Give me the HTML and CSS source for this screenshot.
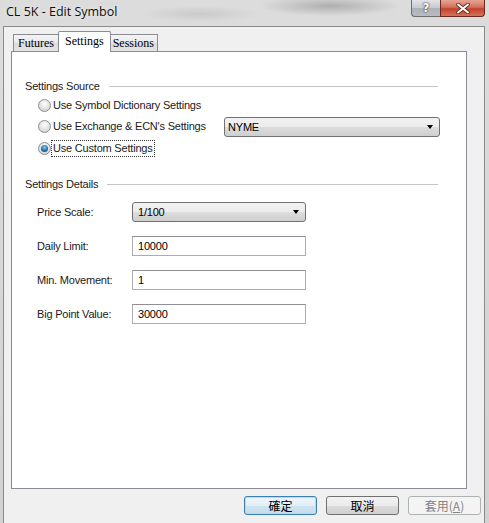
FILE: index.html
```html
<!DOCTYPE html>
<html>
<head>
<meta charset="utf-8">
<link rel="stylesheet" href="styles.css">
</head>
<body>
<div class="window">
  <div class="titlebar">
    <div class="title">CL 5K - Edit Symbol</div>
    <div class="caption">
      <div class="cap help">?</div>
      <div class="cap close">
        <svg width="14" height="11" viewBox="0 0 14 11"><path d="M2 1.5 L12 9.5 M12 1.5 L2 9.5" stroke="#5a2a20" stroke-width="3.6" stroke-linecap="round"/><path d="M2 1.5 L12 9.5 M12 1.5 L2 9.5" stroke="#ffffff" stroke-width="2" stroke-linecap="round"/></svg>
      </div>
    </div>
  </div>
  <div class="client">
    <div class="tabs">
      <div class="tab">Futures</div>
      <div class="tab active">Settings</div>
      <div class="tab">Sessions</div>
    </div>
    <div class="panel">
      <div class="group-head first"><span>Settings Source</span><div class="rule"></div></div>
      <div class="radio-row r1"><span class="radio"></span><span class="rlabel">Use Symbol Dictionary Settings</span></div>
      <div class="radio-row r2"><span class="radio"></span><span class="rlabel">Use Exchange &amp; ECN's Settings</span>
        <div class="combo wide"><span>NYME</span><span class="arrow"></span></div>
      </div>
      <div class="radio-row r3"><span class="radio checked"></span><span class="rlabel focus">Use Custom Settings</span></div>

      <div class="group-head second"><span>Settings Details</span><div class="rule"></div></div>
      <div class="form">
        <div class="frow"><span class="flabel">Price Scale:</span><div class="combo field"><span>1/100</span><span class="arrow"></span></div></div>
        <div class="frow"><span class="flabel">Daily Limit:</span><div class="input field">10000</div></div>
        <div class="frow"><span class="flabel">Min. Movement:</span><div class="input field">1</div></div>
        <div class="frow"><span class="flabel">Big Point Value:</span><div class="input field">30000</div></div>
      </div>
    </div>
    <div class="buttons">
      <div class="btn default">確定</div>
      <div class="btn">取消</div>
      <div class="btn disabled">套用(<u>A</u>)</div>
    </div>
  </div>
</div>
</body>
</html>
```
FILE: styles.css
```css
html, body {
  margin: 0;
  padding: 0;
}
body {
  width: 489px;
  height: 523px;
  overflow: hidden;
  font-family: "Liberation Sans", Arial, sans-serif;
  font-size: 11px;
  letter-spacing: -0.2px;
  color: #1a1a1a;
}
.window {
  width: 489px;
  height: 523px;
  display: flex;
  flex-direction: column;
  background:
    radial-gradient(ellipse 70px 10px at 330px 6px, rgba(120,120,120,0.45), rgba(120,120,120,0) 100%),
    radial-gradient(ellipse 60px 8px at 200px 14px, rgba(150,150,150,0.25), rgba(150,150,150,0) 100%),
    linear-gradient(#dcdcdc, #d2d2d2);
}
.titlebar {
  height: 26px;
  display: flex;
  align-items: flex-start;
  flex-shrink: 0;
}
.title {
  font-family: "Open Sans", "Liberation Sans", sans-serif;
  font-size: 12.5px;
  letter-spacing: 0;
  color: #101010;
  padding: 3px 0 0 6px;
  line-height: 18px;
  text-shadow: 0 0 6px rgba(255,255,255,0.8);
}
.caption {
  margin-left: auto;
  margin-right: 4px;
  display: flex;
}
.cap {
  height: 17px;
  border: 1px solid #6d6d6d;
  border-top: none;
  box-sizing: border-box;
  display: flex;
  align-items: center;
  justify-content: center;
}
.help {
  width: 29px;
  border-radius: 0 0 0 4px;
  border-right: none;
  background: linear-gradient(#e2e4e7, #c6c9ce 50%, #aeb2b8 51%, #b8bcc2);
  color: #fff;
  font-family: "DejaVu Sans", sans-serif;
  font-weight: bold;
  font-size: 12px;
  letter-spacing: 0;
  text-shadow: 0 0 2px #333, 0 0 1px #333;
}
.close {
  width: 45px;
  border-radius: 0 0 4px 0;
  border-color: #6a2a20;
  background: linear-gradient(#e8a493, #d3705b 45%, #c4412a 55%, #d5735b);
}
.client {
  flex: 1;
  margin: 0 4px 0 3px;
  border: 1px solid #8a8a8a;
  border-bottom: none;
  background: #f0f0f0;
  padding: 4px 2px 0 7px;
  display: flex;
  flex-direction: column;
}
.tabs {
  display: flex;
  align-items: flex-end;
  padding-left: 2px;
  margin-bottom: -1px;
  position: relative;
  z-index: 1;
  height: 21px;
}
.tab {
  height: 17px;
  box-sizing: border-box;
  margin-bottom: 1px;
  border: 1px solid #898c95;
  border-bottom: none;
  padding: 0 4px;
  font-family: "Liberation Serif", "Times New Roman", serif;
  font-size: 12px;
  letter-spacing: 0;
  line-height: 16px;
  color: #000;
  background: linear-gradient(#f4f4f4, #e9e9e9 50%, #dcdcdc 51%, #e4e4e4);
}
.tab + .tab {
  border-left: none;
}
.tab.active {
  height: 21px;
  margin: 0 -2px 0 -1px;
  padding: 0 6px;
  border-left: 1px solid #898c95;
  border-radius: 2px 2px 0 0;
  background: #fff;
  line-height: 18px;
  position: relative;
  z-index: 2;
}
.tab.active + .tab {
  border-left: none;
  padding: 0 3px 0 4px;
}
.panel {
  height: 438px;
  box-sizing: border-box;
  margin-right: 15px;
  border: 1px solid #898c95;
  background: #fff;
  padding: 0 28px 0 13px;
  display: flex;
  flex-direction: column;
}
.group-head {
  display: flex;
  align-items: center;
  line-height: 15px;
  color: #1a1a1a;
  white-space: nowrap;
}
.group-head.first {
  margin-top: 27px;
}
.group-head.second {
  margin-top: 18px;
}
.rule {
  flex: 1;
  height: 0;
  border-top: 1px solid #c5c5c5;
  margin-left: 9px;
}
.radio-row {
  display: flex;
  align-items: center;
  height: 21px;
  padding-left: 13px;
  white-space: nowrap;
}
.radio-row.r1 {
  margin-top: 1px;
}
.radio-row.r3 {
  height: 22px;
}
.radio {
  width: 13px;
  height: 13px;
  box-sizing: border-box;
  border-radius: 50%;
  border: 1px solid #8e8f8f;
  background: radial-gradient(circle at 50% 35%, #ffffff 0%, #e6e6e6 45%, #c9c9c9 100%);
  display: flex;
  align-items: center;
  justify-content: center;
  flex-shrink: 0;
}
.radio.checked::after {
  content: "";
  width: 7px;
  height: 7px;
  border-radius: 50%;
  background: radial-gradient(circle at 50% 35%, #8fd0f5 0%, #2f7fb8 45%, #0d3a5f 100%);
}
.rlabel {
  margin-left: 0;
  padding: 0 1px;
  line-height: 15px;
  border: 1px solid transparent;
}
.rlabel.focus {
  border: 1px dotted #333;
}
.combo {
  height: 20px;
  box-sizing: border-box;
  border: 1px solid #707070;
  border-radius: 3px;
  background: linear-gradient(#f2f2f2, #ebebeb 50%, #dddddd 51%, #cfcfcf);
  display: flex;
  align-items: center;
  padding: 0 6px 0 3px;
  color: #000;
}
.combo.wide {
  margin-left: auto;
  width: 216px;
  margin-right: -2px;
}
.arrow {
  margin-left: auto;
  width: 0;
  height: 0;
  border-left: 3.5px solid transparent;
  border-right: 3.5px solid transparent;
  border-top: 4px solid #000;
}
.form {
  display: flex;
  flex-direction: column;
  gap: 14px;
  margin-top: 10px;
  padding-left: 12px;
}
.frow {
  display: flex;
  align-items: center;
  height: 20px;
  white-space: nowrap;
}
.flabel {
  width: 95px;
  flex-shrink: 0;
}
.field {
  width: 174px;
}
.input {
  height: 20px;
  box-sizing: border-box;
  border: 1px solid #abadb3;
  border-top-color: #8e9096;
  background: #fff;
  padding: 0 5px;
  line-height: 18px;
  color: #000;
}
.combo.field {
  padding-left: 5px;
}
.buttons {
  display: flex;
  justify-content: flex-end;
  gap: 9px;
  margin-top: 7px;
  margin-right: 1px;
}
.btn {
  width: 73px;
  height: 19px;
  box-sizing: border-box;
  border: 1px solid #707070;
  border-radius: 3px;
  background: linear-gradient(#f2f2f2, #ebebeb 50%, #dddddd 51%, #cfcfcf);
  font-family: "Noto Sans CJK TC", "Noto Sans CJK SC", sans-serif;
  font-size: 12px;
  letter-spacing: 0;
  line-height: 17px;
  text-align: center;
  color: #000;
}
.btn.default {
  border-color: #3c7fb1;
  box-shadow: inset 0 0 0 1px #b4dcf2;
  background: linear-gradient(#eef6fb, #e2eff7 50%, #d1e4f0 51%, #c3dbea);
}
.btn.disabled {
  border-color: #adb2b5;
  background: #f4f4f4;
  color: #838383;
}
```
